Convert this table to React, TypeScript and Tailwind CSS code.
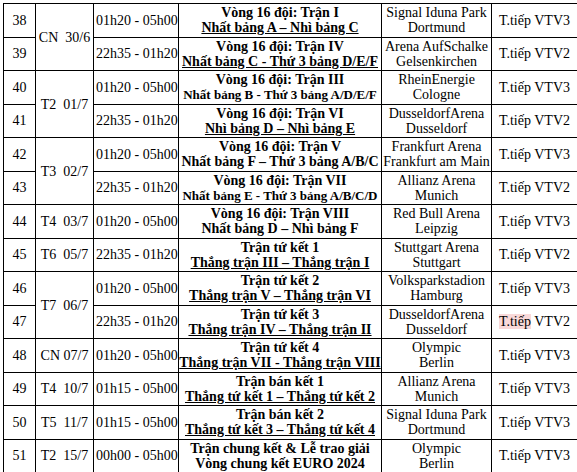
type Row = {
  no: number
  day?: string
  span?: number
  time: string
  m1: string
  m2: string
  m2Size?: string
  ul?: boolean
  s1: string
  s2: string
  ch: string
  mark?: boolean
}

const rows: Row[] = [
  { no: 38, day: 'CN  30/6', span: 2, time: '01h20 - 05h00', m1: 'Vòng 16 đội: Trận I', m2: 'Nhất bảng A – Nhì bảng C', ul: true, s1: 'Signal Iduna Park', s2: 'Dortmund', ch: 'VTV3' },
  { no: 39, time: '22h35 - 01h20', m1: 'Vòng 16 đội: Trận IV', m2: 'Nhất bảng C - Thứ 3 bảng D/E/F', ul: true, s1: 'Arena AufSchalke', s2: 'Gelsenkirchen', ch: 'VTV2' },
  { no: 40, day: 'T2  01/7', span: 2, time: '01h20 - 05h00', m1: 'Vòng 16 đội: Trận III', m2: 'Nhất bảng B - Thứ 3 bảng A/D/E/F', m2Size: 'text-[13px]', s1: 'RheinEnergie', s2: 'Cologne', ch: 'VTV3' },
  { no: 41, time: '22h35 - 01h20', m1: 'Vòng 16 đội: Trận VI', m2: 'Nhì bảng D – Nhì bảng E', ul: true, s1: 'DusseldorfArena', s2: 'Dusseldorf', ch: 'VTV2' },
  { no: 42, day: 'T3  02/7', span: 2, time: '01h20 - 05h00', m1: 'Vòng 16 đội: Trận V', m2: 'Nhất bảng F – Thứ 3 bảng A/B/C', s1: 'Frankfurt Arena', s2: 'Frankfurt am Main', ch: 'VTV3' },
  { no: 43, time: '22h35 - 01h20', m1: 'Vòng 16 đội: Trận VII', m2: 'Nhất bảng E - Thứ 3 bảng A/B/C/D', m2Size: 'text-[13px]', s1: 'Allianz Arena', s2: 'Munich', ch: 'VTV2' },
  { no: 44, day: 'T4  03/7', span: 1, time: '01h20 - 05h00', m1: 'Vòng 16 đội: Trận VIII', m2: 'Nhất bảng D – Nhì bảng F', s1: 'Red Bull Arena', s2: 'Leipzig', ch: 'VTV3' },
  { no: 45, day: 'T6  05/7', span: 1, time: '22h35 - 01h20', m1: 'Trận tứ kết 1', m2: 'Thắng trận III – Thắng trận I', ul: true, s1: 'Stuttgart Arena', s2: 'Stuttgart', ch: 'VTV2' },
  { no: 46, day: 'T7  06/7', span: 2, time: '01h20 - 05h00', m1: 'Trận tứ kết 2', m2: 'Thắng trận V – Thắng trận VI', ul: true, s1: 'Volksparkstadion', s2: 'Hamburg', ch: 'VTV3' },
  { no: 47, time: '22h35 - 01h20', m1: 'Trận tứ kết 3', m2: 'Thắng trận IV – Thắng trận II', ul: true, s1: 'DusseldorfArena', s2: 'Dusseldorf', ch: 'VTV2', mark: true },
  { no: 48, day: 'CN 07/7', span: 1, time: '01h20 - 05h00', m1: 'Trận tứ kết 4', m2: 'Thắng trận VII - Thắng trận VIII', ul: true, s1: 'Olympic', s2: 'Berlin', ch: 'VTV3' },
  { no: 49, day: 'T4  10/7', span: 1, time: '01h15 - 05h00', m1: 'Trận bán kết 1', m2: 'Thắng tứ kết 1 – Thắng tứ kết 2', ul: true, s1: 'Allianz Arena', s2: 'Munich', ch: 'VTV3' },
  { no: 50, day: 'T5  11/7', span: 1, time: '01h15 - 05h00', m1: 'Trận bán kết 2', m2: 'Thắng tứ kết 3 – Thắng tứ kết 4', ul: true, s1: 'Signal Iduna Park', s2: 'Dortmund', ch: 'VTV3' },
  { no: 51, day: 'T2  15/7', span: 1, time: '00h00 - 05h00', m1: 'Trận chung kết & Lễ trao giải', m2: 'Vòng chung kết EURO 2024', s1: 'Olympic', s2: 'Berlin', ch: 'VTV3' },
]

const cell = 'border border-black p-0 align-middle'

export default function App() {
  return (
    <div className="bg-white w-[577px] h-[472px] overflow-hidden pt-[3px] pl-[3px] text-black font-serif text-[14px]">
      <table className="border-collapse table-fixed w-[574px] font-['Liberation_Serif']">
        <colgroup>
          <col className="w-[32px]" />
          <col className="w-[58px]" />
          <col className="w-[85px]" />
          <col className="w-[203px]" />
          <col className="w-[110px]" />
          <col className="w-[86px]" />
        </colgroup>
        <tbody>
          {rows.map((r) => (
            <tr key={r.no} className="h-[33.5px]">
              <td className={`${cell} text-center`}>{r.no}</td>
              {r.day && (
                <td rowSpan={r.span} className={`${cell} text-center whitespace-pre`}>
                  {r.day}
                </td>
              )}
              <td className={`${cell} pl-[2px] whitespace-nowrap`}>{r.time}</td>
              <td className={`${cell} text-center font-bold leading-[15px] whitespace-nowrap`}>
                <div>{r.m1}</div>
                <div className={`${r.m2Size ?? ''} ${r.ul ? 'underline' : ''}`}>{r.m2}</div>
              </td>
              <td className={`${cell} text-center leading-[15px] whitespace-nowrap`}>
                <div>{r.s1}</div>
                <div>{r.s2}</div>
              </td>
              <td className={`${cell} text-center whitespace-nowrap`}>
                <span className={r.mark ? 'bg-[#f9d9d9]' : ''}>T.tiếp</span> {r.ch}
              </td>
            </tr>
          ))}
        </tbody>
      </table>
    </div>
  )
}
